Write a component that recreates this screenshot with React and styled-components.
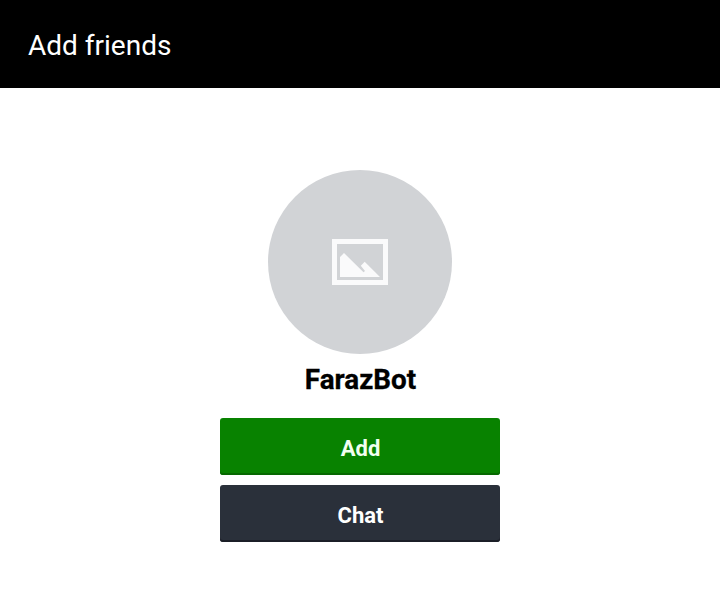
import React from "react";
import styled, { createGlobalStyle } from "styled-components";

const GlobalStyle = createGlobalStyle`
  * { box-sizing: border-box; }
  body { margin: 0; background: #fff; font-family: Roboto, sans-serif; }
`;

const Screen = styled.div`
  display: flex;
  flex-direction: column;
  height: 589px;
  overflow: hidden;
`;

const Header = styled.header`
  display: flex;
  align-items: center;
  height: 88px;
  padding: 4px 28px 0;
  background: #000;
`;

const Title = styled.h1`
  margin: 0;
  color: #fff;
  font-size: 28px;
  line-height: 34px;
  font-weight: 400;
`;

const Profile = styled.main`
  display: flex;
  flex-direction: column;
  align-items: center;
  padding-top: 82px;
`;

const Avatar = styled.div`
  display: flex;
  align-items: center;
  justify-content: center;
  width: 184px;
  height: 184px;
  border-radius: 50%;
  background: #d1d3d6;
`;

const Name = styled.h2`
  margin: 9px 0 21px;
  padding-left: 1px;
  color: #000;
  font-size: 27.8px;
  line-height: 34px;
  font-weight: 700;
  -webkit-text-stroke: 0.3px #000;
`;

const Actions = styled.div`
  display: flex;
  flex-direction: column;
  gap: 10px;
  width: 280px;
`;

const Button = styled.button`
  height: 57px;
  padding: 5px 0 0 1px;
  border: 0;
  border-radius: 3px;
  background: ${({ $tone }) => ($tone === "primary" ? "#088200" : "#2a303a")};
  box-shadow: inset 0 -2px ${({ $tone }) => ($tone === "primary" ? "#066800" : "#1b1e27")};
  color: ${({ $tone }) => ($tone === "primary" ? "#f1fff0" : "#fff")};
  font: 700 22px/30px Roboto, sans-serif;
`;

function PictureIcon() {
  return (
    <svg width="56" height="46" viewBox="0 0 56 46" fill="none">
      <rect x="2.5" y="2.5" width="51" height="41" stroke="#fafafb" strokeWidth="5" />
      <path d="M8 38V18L12 14L31.5 33.2L33 32L28.8 26.7L32.7 22.7L48 38Z" fill="#fafafb" />
    </svg>
  );
}

export default function App() {
  return (
    <Screen>
      <GlobalStyle />
      <Header>
        <Title>Add friends</Title>
      </Header>
      <Profile>
        <Avatar>
          <PictureIcon />
        </Avatar>
        <Name>FarazBot</Name>
        <Actions>
          <Button $tone="primary">Add</Button>
          <Button $tone="secondary">Chat</Button>
        </Actions>
      </Profile>
    </Screen>
  );
}
